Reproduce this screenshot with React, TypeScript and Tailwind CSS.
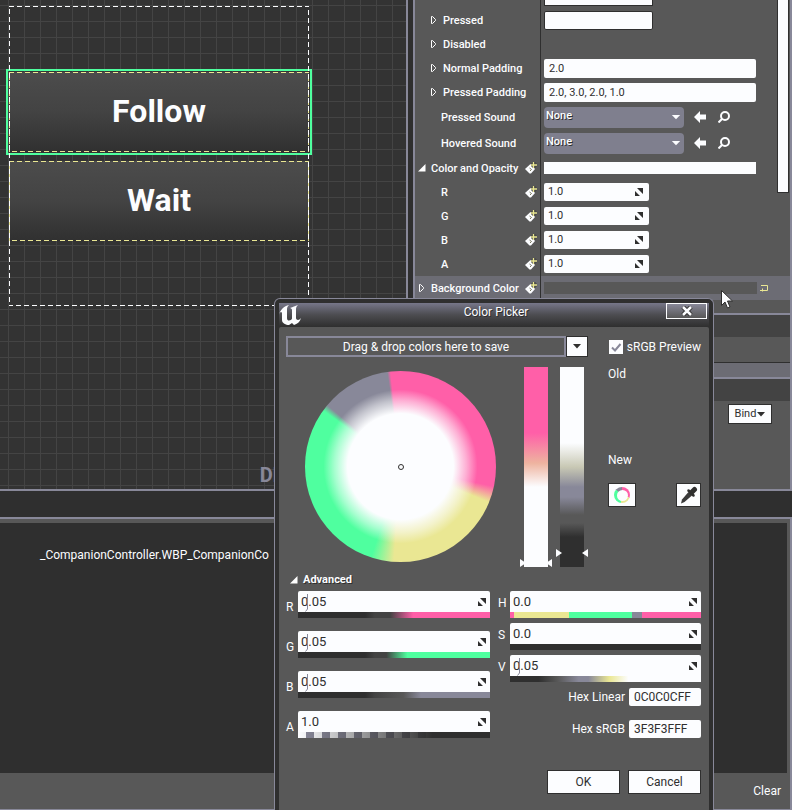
import React from "react";

const Spin = () => (
  <svg viewBox="0 0 10 10" className="pointer-events-none size-[10px] shrink-0 fill-[#2f2f2f]">
    <path d="M3 1h6v6zM1 4v5h5z" />
  </svg>
);

const Expander = ({ open = false }: { open?: boolean }) =>
  open ? (
    <svg viewBox="0 0 8 8" className="size-2 shrink-0"><path d="M7.5 0v7.5H0z" fill="#fff" /></svg>
  ) : (
    <svg viewBox="0 0 8 8" className="size-2 shrink-0"><path d="M1.500.5v7h1l3-3v-1l-3-3z" fill="none" stroke="#fff" /></svg>
  );

const KeyIcon = () => (
  <svg viewBox="0 0 12 12" className="size-3 shrink-0">
    <path d="M5.500 2L10 7l-4 4.500h-1.500L0 7z" fill="#fcfdff" />
    <path d="M9 0v6M6 3h6" stroke="#434343" strokeWidth="3" />
    <path d="M8.500 0v6M6 3h6" stroke="#eae793" strokeWidth="1.300" />
    <path d="M4.500 6l2 1.500-1.500 1.500" stroke="#77775f" fill="none" />
  </svg>
);

function Row({ label, indent = "pl-[15px]", expander, open, keyed, tall, active, htmlFor, children }: {
  label: string; indent?: string; expander?: boolean; open?: boolean; keyed?: boolean;
  tall?: boolean; active?: boolean; htmlFor?: string; children?: React.ReactNode;
}) {
  return (
    <div className={`flex ${tall ? "h-[26px]" : "h-6"} ${active ? "bg-[#6c6c74]" : ""}`}>
      <div className={`flex w-[126px] shrink-0 items-center border-r border-[#2f2f2f] pr-[3px] ${indent}`}>
        {expander && <button aria-label={`Expand ${label}`} className="mr-[5px] flex w-2"><Expander open={open} /></button>}
        <label htmlFor={htmlFor} className="flex-1 pt-[2px] whitespace-nowrap">{label}</label>
        {keyed && <button aria-label={`Key ${label}`}><KeyIcon /></button>}
      </div>
      <div className="flex min-w-0 flex-1 items-center pl-[3px]">{children}</div>
    </div>
  );
}

const TextValue = ({ id, value }: { id: string; value: string }) => (
  <input id={id} defaultValue={value} className="h-[19px] w-[212px] rounded-xs bg-[#fcfdff] px-[5px] font-normal text-[#2f2f2f] outline-none" />
);

const NumberValue = ({ id }: { id: string }) => (
  <div className="flex h-[18px] w-[105px] items-center rounded-xs bg-[#fcfdff] pr-[5px]">
    <input id={id} defaultValue="1.0" className="min-w-0 flex-1 bg-transparent pl-1 font-normal text-[#2f2f2f] outline-none" />
    <Spin />
  </div>
);

const SoundValue = ({ id }: { id: string }) => (
  <>
    <div className="relative">
      <select id={id} className="block h-[21px] w-[140px] appearance-none rounded-sm bg-[#7f7f8e] pb-px pl-[2px] text-[#fcfdff] outline-none [text-shadow:1px_1px_#2f2f2f]">
        <option>None</option>
      </select>
      <svg viewBox="0 0 10 6" className="pointer-events-none absolute top-2 right-[3px] h-[5px] w-[10px]"><path d="M0 0h10L5 5z" fill="#fcfdff" /></svg>
    </div>
    <button aria-label="Use selected asset" className="ml-[10px]">
      <svg viewBox="0 0 12 12" className="size-3"><path d="M0 6l6-6v3.500h6v5H6V12z" fill="#fcfdff" /></svg>
    </button>
    <button aria-label="Browse to asset" className="ml-3">
      <svg viewBox="0 0 12 12" className="size-3" fill="none" stroke="#fcfdff" strokeWidth="2"><circle cx="7" cy="5" r="4" /><path d="M4 8l-3.500 3.500" /></svg>
    </button>
  </>
);

const Dashes = ({ color }: { color: string }) => (
  <svg className="pointer-events-none absolute inset-0 size-full">
    <rect x="0" y="0" width="100%" height="100%" fill="none" stroke={color} strokeWidth="2" strokeDasharray="5 3" />
  </svg>
);

const WidgetButton = ({ text, selected }: { text: string; selected?: boolean }) => (
  <div className="relative h-20">
    <button className="h-full w-full bg-linear-to-b from-[#4c4c4c] via-[#434343] to-[#303030] pb-[2px] text-[32px] font-bold text-[#fcfdff]">{text}</button>
    <Dashes color="#eae793" />
    {selected && <span className="pointer-events-none absolute -inset-[3px] border-2 border-[#4fff9f]" />}
  </div>
);

function Channel({ name, value, strip, caret, labelPad = "pt-1" }: { name: string; value: string; strip: string; caret?: boolean; labelPad?: string }) {
  return (
    <div className="flex items-center gap-1">
      <label htmlFor={`ch-${name}`} className={`w-2 ${labelPad}`}>{name}</label>
      <div className="flex-1">
        <div className="relative flex h-[21px] items-center rounded-t-xs bg-[#fcfdff] pr-[3px]">
          <input id={`ch-${name}`} defaultValue={value} className="min-w-0 flex-1 bg-transparent pl-[3px] text-[13px] text-[#2f2f2f] outline-none" />
          <Spin />
          {caret && (
            <svg viewBox="0 0 4 18" className="pointer-events-none absolute top-[3px] left-[7px] h-[18px] w-1"><path d="M2.500 0v15L.5 17.500" fill="none" stroke="#888899" /></svg>
          )}
        </div>
        <div className={`h-[6px] ${strip}`} />
      </div>
    </div>
  );
}

const HexField = ({ label, id, value }: { label: string; id: string; value: string }) => (
  <div className="flex items-center justify-end gap-1">
    <label htmlFor={id}>{label}</label>
    <input id={id} defaultValue={value} className="h-[18px] w-[72px] rounded-xs bg-[#fcfdff] px-[5px] text-[#2f2f2f] outline-none" />
  </div>
);

function VerticalBar({ label, gradient, value }: { label: string; gradient: string; value: number }) {
  return (
    <div className="relative h-[200px] w-6">
      <input type="range" aria-label={label} defaultValue={value} className={`block h-full w-full appearance-none [writing-mode:vertical-lr] [direction:rtl] [&::-webkit-slider-thumb]:appearance-none ${gradient}`} />
      <svg viewBox="0 0 32 8" className="pointer-events-none absolute -left-1 h-2 w-8" style={{ bottom: `${value}%` }}>
        <path d="M0 0l6 4-6 4zM32 0l-6 4 6 4z" fill="#fcfdff" />
      </svg>
    </div>
  );
}

function ColorPicker() {
  return (
    <section role="dialog" aria-label="Color Picker" className="absolute top-[298px] bottom-0 left-[274px] flex w-[440px] flex-col rounded-t-md border border-b-0 border-[#888899] bg-[#2f2f2f] px-1 pt-1 text-[12px] text-[#fcfdff]">
      <header className="relative flex h-6 items-start justify-center bg-linear-to-b from-[#77778a] via-[#4c4c50] to-[#2f2f2f] pl-1">
        <svg viewBox="0 0 24 20" className="absolute top-[2px] left-0 h-5 w-6">
          <path d="M0 10C1 5 5 1 10 0 8 2 8 3 8 5v8c0 2 1 2.500 2 2.500s3-1 3-2V5c0-1-1-2-2-2 3-1 5-2 8-3-2 2-2 3-2 5v8c0 1 1 2 2 2s2-1 3-2c-1 4-4 6-7 7l-2-2-3 2C7 20 3 18.500 3 15V9c0-1 0-2-1-2-.8 0-1.500 1-2 3z" fill="#fcfdff" />
        </svg>
        <h2 className="leading-[18px] [text-shadow:1px_1px_#2f2f2f]">Color Picker</h2>
        <button aria-label="Close" className="absolute top-0 right-[2px] flex h-4 w-[41px] items-center justify-center border border-[#fcfdff] bg-linear-to-b from-[#888899] to-[#585858]">
          <svg viewBox="0 0 12 10" className="h-[10px] w-3" fill="none"><path d="M2 1l8 8M10 1L2 9" stroke="#2f2f2f" strokeWidth="4.500" /><path d="M2 1l8 8M10 1L2 9" stroke="#fcfdff" strokeWidth="2.500" /></svg>
        </button>
      </header>
      <div className="flex-1 rounded-t-xs bg-[#585858] pt-[9px] pr-2 pl-[7px]">
        <div className="flex justify-between">
          <div className="flex">
            <div className="flex h-[21px] w-[280px] items-center justify-center border-2 border-[#888899]">Drag &amp; drop colors here to save</div>
            <button aria-label="Saved themes" className="flex h-[21px] w-[22px] items-center justify-center border border-[#2f2f2f] bg-[#fcfdff]">
              <svg viewBox="0 0 8 5" className="h-[5px] w-2"><path d="M0 0h8L4 4.500z" fill="#2f2f2f" /></svg>
            </button>
          </div>
          <label className="flex items-center gap-1">
            <span className="relative size-[14px]">
              <input type="checkbox" defaultChecked className="block size-[14px] appearance-none bg-[#fcfdff]" />
              <svg viewBox="0 0 14 14" className="pointer-events-none absolute inset-0 size-[14px]"><path d="M3 7.500l3 3L11.500 4" fill="none" stroke="#888899" strokeWidth="2" /></svg>
            </span>
            sRGB Preview
          </label>
        </div>
        <div className="mt-[10px] flex h-[200px]">
          <div role="img" aria-label="Color wheel" className="mt-1 ml-[19px] flex size-[191px] items-center justify-center rounded-full bg-[radial-gradient(circle_at_50%_50%,#fcfdff_53px,rgba(252,253,255,0.5)_66px,transparent_77px),conic-gradient(from_-6deg,#ff5fa8_0deg,#ff5fa8_108deg,#eae793_118deg,#eae793_190deg,#4fff9f_204deg,#4fff9f_312deg,#888899_316deg,#888899_358deg,#ff5fa8_360deg)]">
            <span className="size-[6px] rounded-full border border-[#2f2f2f]" />
          </div>
          <div className="ml-7 flex gap-3">
            <VerticalBar label="Saturation" value={0} gradient="bg-[linear-gradient(#ff5fa8_33%,#eeb39f_48%,#fcfdff_60%)]" />
            <VerticalBar label="Value" value={5} gradient="bg-[linear-gradient(#fcfdff_38%,#c8c8b4_50%,#888899_60%,#888899_65%,#585858_74%,#585858_78%,#2f2f2f_85%)]" />
          </div>
          <div className="ml-6 flex flex-1 flex-col leading-[14px]">
            <span className="h-[86px]">Old</span>
            <span className="h-[30px]">New</span>
            <div className="flex justify-between">
              <button aria-label="Toggle color wheel" className="flex h-6 w-7 items-center justify-center border border-[#2f2f2f] bg-[#fcfdff]">
                <span className="flex size-4 items-center justify-center rounded-full bg-[conic-gradient(#ff5fa8_110deg,#eae793_110deg_190deg,#4fff9f_190deg_310deg,#888899_310deg)]"><span className="size-[11px] rounded-full bg-[#fcfdff]" /></span>
              </button>
              <button aria-label="Pick color from screen" className="flex h-6 w-[25px] items-center justify-center border border-[#2f2f2f] bg-[#fcfdff]">
                <svg viewBox="0 0 18 18" className="size-[18px]"><path d="M1 17.500l1-4L8.500 6 12 9.500 4.500 16z" fill="#3a3a3a" /><path d="M8.500 4.500l5 5" stroke="#2f2f2f" strokeWidth="2.500" strokeLinecap="round" /><path d="M11.500 6.500l3-3" stroke="#2f2f2f" strokeWidth="5" strokeLinecap="round" /></svg>
              </button>
            </div>
          </div>
        </div>
        <button className="mt-1 flex h-[18px] items-center gap-[5px] pl-1 text-[11px] font-bold [text-shadow:1px_1px_#2f2f2f]"><Expander open />Advanced</button>
        <div className="mt-[2px] flex gap-2">
          <div className="flex w-[204px] flex-col gap-[13px]">
            <Channel name="R" value="0.05" caret strip="bg-[linear-gradient(90deg,#2f2f2f_35%,#434343_40%,#434343_48%,#ff5fa8_60%)]" />
            <Channel name="G" value="0.05" caret strip="bg-[linear-gradient(90deg,#2f2f2f_35%,#434343_40%,#434343_46%,#4fff9f_57%)]" />
            <Channel name="B" value="0.05" caret strip="bg-[linear-gradient(90deg,#2f2f2f_35%,#434343_40%,#585858_55%,#888899_64%)]" />
            <Channel name="A" value="1.0" strip="bg-[linear-gradient(90deg,transparent,#2f2f2f_70%),repeating-linear-gradient(90deg,#fcfdff_0px_8px,#888899_8px_16px)]" />
          </div>
          <div className="flex flex-1 flex-col gap-[5px]">
            <Channel name="H" value="0.0" labelPad="pb-1" strip="bg-[linear-gradient(90deg,#ff5fa8_2%,#eae793_2%_31%,#4fff9f_31%_64%,#888899_64%_69%,#ff5fa8_69%)]" />
            <Channel name="S" value="0.0" labelPad="pb-1" strip="bg-[#2f2f2f]" />
            <Channel name="V" value="0.05" labelPad="pb-1" caret strip="bg-[linear-gradient(90deg,#2f2f2f_15%,#585858_25%,#888899_36%,#888899_41%,#eae793_52%,#fcfdff_62%)]" />
            <div className="mt-px flex flex-col gap-[14px]">
              <HexField label="Hex Linear" id="hex-linear" value="0C0C0CFF" />
              <HexField label="Hex sRGB" id="hex-srgb" value="3F3F3FFF" />
            </div>
          </div>
        </div>
        <div className="mt-8 flex justify-end gap-2 text-[#2f2f2f]">
          <button className="h-6 w-[73px] border border-[#2f2f2f] bg-[#fcfdff]">OK</button>
          <button className="h-6 w-[73px] border border-[#2f2f2f] bg-[#fcfdff]">Cancel</button>
        </div>
      </div>
    </section>
  );
}

export default function App() {
  return (
    <div className="relative flex h-screen flex-col overflow-hidden bg-[#2f2f2f] font-[Roboto,sans-serif] text-[12px] text-[#fcfdff]">
      <div className="flex">
        <main className="relative flex flex-1 flex-col justify-between border-r-2 border-b-2 border-[#888899] bg-[#333333] bg-[linear-gradient(90deg,#444444_1px,transparent_1px),linear-gradient(#444444_1px,transparent_1px)] bg-[size:16px_16px] bg-[position:8px_5px]">
          <div className="relative mt-[6px] ml-[9px] h-[300px] w-[300px] pt-[66px]">
            <div className="flex flex-col gap-[9px]">
              <WidgetButton text="Follow" selected />
              <WidgetButton text="Wait" />
            </div>
            <Dashes color="#fcfdff" />
          </div>
          <div className="pr-[52px] text-right text-[20px] leading-7 font-bold text-[#888899]">DESIGNER</div>
        </main>
        <aside className="ml-[5px] w-[379px] shrink-0 border-r-2 border-l-2 border-[#888899] bg-[#585858]">
          <div className="relative h-[313px] text-[11px] font-medium">
            <div className="flex h-2">
              <div className="w-[126px] border-r border-[#2f2f2f]" />
              <div className="ml-[3px] h-[6px] w-[109px] border border-t-0 border-[#2f2f2f] bg-[#fcfdff]" />
            </div>
            <Row label="Pressed" expander><div className="h-[19px] w-[109px] rounded-xs border border-[#2f2f2f] bg-[#fcfdff]" /></Row>
            <Row label="Disabled" expander />
            <Row label="Normal Padding" expander htmlFor="np"><TextValue id="np" value="2.0" /></Row>
            <Row label="Pressed Padding" expander htmlFor="pp"><TextValue id="pp" value="2.0, 3.0, 2.0, 1.0" /></Row>
            <Row label="Pressed Sound" tall indent="pl-[26px]" htmlFor="ps"><SoundValue id="ps" /></Row>
            <Row label="Hovered Sound" tall indent="pl-[26px]" htmlFor="hs"><SoundValue id="hs" /></Row>
            <Row label="Color and Opacity" expander open keyed indent="pl-[3px]"><div className="h-3 w-[212px] bg-[#fcfdff]" /></Row>
            <Row label="R" keyed indent="pl-[26px]" htmlFor="cr"><NumberValue id="cr" /></Row>
            <Row label="G" keyed indent="pl-[26px]" htmlFor="cg"><NumberValue id="cg" /></Row>
            <Row label="B" keyed indent="pl-[26px]" htmlFor="cb"><NumberValue id="cb" /></Row>
            <Row label="A" keyed indent="pl-[26px]" htmlFor="ca"><NumberValue id="ca" /></Row>
            <Row label="Background Color" expander keyed active indent="pl-[3px]">
              <div className="h-3 w-[213px] bg-[#585858]" />
              <button aria-label="Reset to default" className="ml-[3px]"><svg viewBox="0 0 8 8" className="size-2" fill="none" stroke="#eae793"><path d="M1 1.500h6.500v5H3M0 6.500h4M2.500 4.500v3" /></svg></button>
            </Row>
            <div className="absolute top-0 right-px h-[193px] w-3 border border-t-0 border-[#2f2f2f] bg-[#fcfdff]" />
          </div>
          <div className="h-6 border-t-2 border-[#888899] bg-[#434343]" />
          <div className="h-[26px] border-b border-[#2f2f2f]" />
          <div className="h-[14px] bg-[#6c6c74]" />
          <div className="h-6 border-t-2 border-[#888899] bg-[#434343]" />
          <div className="flex h-[90px] items-start justify-end border-b-2 border-[#888899] pt-[3px] pr-[18px]">
            <button className="flex h-5 w-11 items-center justify-center gap-px border border-[#2f2f2f] bg-[#fcfdff] text-[11px] text-[#2f2f2f]">
              Bind<svg viewBox="0 0 8 5" className="h-[5px] w-2"><path d="M0 0h8L4 4.500z" fill="#2f2f2f" /></svg>
            </button>
          </div>
        </aside>
      </div>
      <section className="mt-[26px] flex flex-1 flex-col border-t-2 border-r-2 border-b border-[#888899] bg-[#585858] pt-1">
        <div className="mr-[3px] flex-1 bg-[#2f2f2f] pt-[23px] pl-10 leading-[18px]">_CompanionController.WBP_CompanionCo</div>
        <div className="flex h-9 items-center justify-end pr-[9px]"><button>Clear</button></div>
      </section>
      <ColorPicker />
      <svg viewBox="0 0 12 19" className="pointer-events-none absolute top-[290px] left-[721px] h-[19px] w-3"><path d="M.5.5v15l3.500-3.500 2.500 6 2.500-1-2.500-6h5z" fill="#fcfdff" stroke="#2f2f2f" /></svg>
    </div>
  );
}
